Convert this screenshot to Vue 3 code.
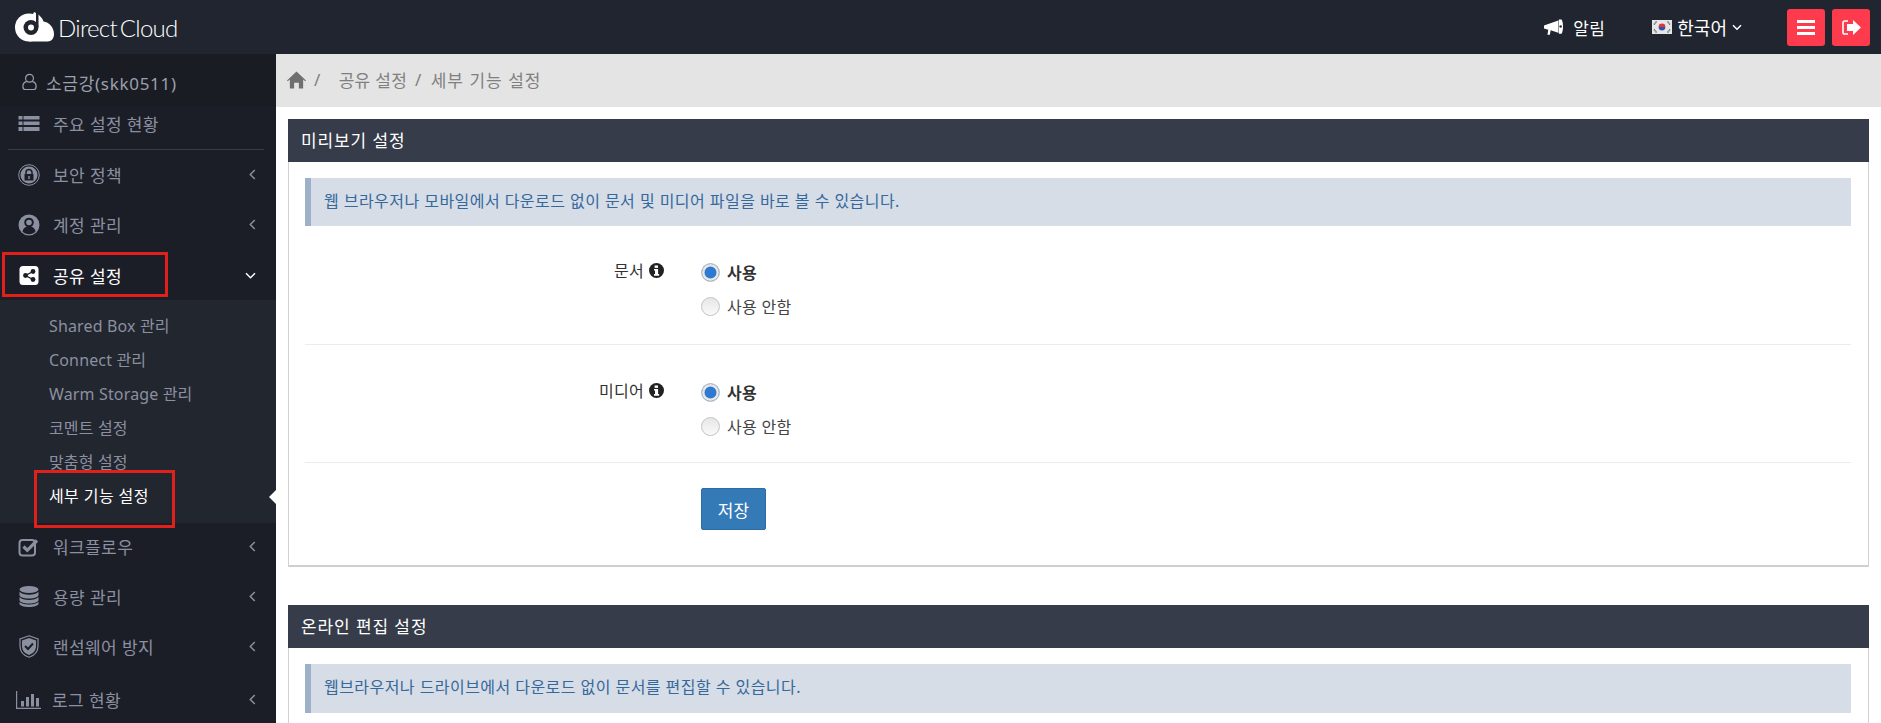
<template>
  <div class="page">
    <header class="topbar">
      <div class="brand">
        <svg class="brand__logo" viewBox="0 0 40 30" width="40" height="30">
          <circle cx="14" cy="15.500" r="14" fill="#fff" />
          <path fill="#fff" d="M19 0c4 1.500 8 5 9.500 9.500C34 10 39 15.500 39 22c0 4.500-2.500 7.500-6.500 7.500H14V10z" />
          <circle cx="16" cy="15.500" r="7.500" fill="#21252f" />
          <rect x="21" y="0" width="2.500" height="15" fill="#21252f" />
          <circle cx="16" cy="15.500" r="3" fill="#fff" />
        </svg>
        <span class="brand__name">Direct Cloud</span>
      </div>
      <div class="topbar__right">
        <div class="notice">
          <svg viewBox="0 0 20 17" width="19" height="17">
            <path fill="#fff" d="M0 6.500 15 1.200V14L7 11.500l-.8 4.500H3.600l.9-5.200L0 9.500zM16 0h2.500c1 1.500 1.500 4 1.500 7.500s-.5 6-1.500 7.500H16c-.3 0-.5-.2-.5-.5V.5c0-.3.2-.5.5-.5z" />
            <circle cx="17.500" cy="7.500" r="1.300" fill="#21252f" />
          </svg>
          <span>알림</span>
        </div>
        <div class="lang">
          <svg viewBox="0 0 20 14" width="20" height="14">
            <rect width="20" height="14" fill="#e6e6e6" />
            <path fill="#e0333c" d="M6.600 7a3.400 3.400 0 0 1 6.800 0z" />
            <path fill="#2a55b0" d="M6.600 7a3.400 3.400 0 0 0 6.800 0z" />
            <path stroke="#555" stroke-width="1.400" stroke-dasharray="1 .5" d="M2 4.500 4.500 1.500M15.500 1.500 18 4.500M2 9.500l2.500 3M15.500 12.500l2.500-3" />
          </svg>
          <span>한국어</span>
          <svg viewBox="0 0 10 7" width="10" height="7">
            <path fill="none" stroke="#fff" stroke-width="1.500" d="M1 1.200 5 5.200 9 1.200" />
          </svg>
        </div>
        <div class="actions">
          <button class="actions__btn" type="button">
            <svg viewBox="0 0 18 15" width="18" height="15">
              <path fill="#fff" d="M0 0h18v3H0zM0 6h18v3H0zM0 12h18v3H0z" />
            </svg>
          </button>
          <button class="actions__btn" type="button">
            <svg viewBox="0 0 19 15" width="19" height="15">
              <path fill="#fff" d="M11 0l8 7.500L11 15v-4H5V4h6z" />
              <path fill="none" stroke="#fff" stroke-width="1.600" d="M6 1H2.800C1.800 1 1 1.800 1 2.800v9.400c0 1 .8 1.800 1.800 1.800H6" />
            </svg>
          </button>
        </div>
      </div>
    </header>

    <div class="body">
      <aside class="sidebar">
        <div class="user">
          <svg viewBox="0 0 16 18" width="15" height="18">
            <circle cx="8" cy="5" r="4.200" fill="none" stroke="#9ba0ad" stroke-width="1.300" />
            <path fill="none" stroke="#9ba0ad" stroke-width="1.300" d="M5 8.500C2.500 9 1 10.500 1 13v1C1 16 2 17 3.500 17h9c1.500 0 2.500-1 2.500-3v-1c0-2.500-1.500-4-4-4.500" />
          </svg>
          <span>소금강(skk0511)</span>
        </div>

        <a class="menu-item menu-item--first">
          <svg class="menu-item__icon" viewBox="0 0 21 15" width="21" height="15">
            <path fill="#8b90a0" d="M0 0h4v3.500H0zM5 0h16v3.500H5zM0 5.500h4V9H0zM5 5.500h16V9H5zM0 11h4v4H0zM5 11h16v4H5z" />
          </svg>
          <span>주요 설정 현황</span>
        </a>
        <div class="sidebar__rule"></div>

        <a class="menu-item">
          <svg class="menu-item__icon" viewBox="0 0 22 22" width="22" height="22">
            <circle cx="11" cy="11" r="10.300" fill="none" stroke="#8b90a0" stroke-width="1" />
            <circle cx="11" cy="11" r="8.500" fill="#8b90a0" />
            <path fill="none" stroke="#1b1e27" stroke-width="1.500" d="M8 10V8.500a3 3 0 0 1 6 0V10" />
            <rect x="6.500" y="10" width="9" height="6.500" fill="#1b1e27" />
            <rect x="10.300" y="12" width="1.400" height="3" fill="#8b90a0" />
          </svg>
          <span>보안 정책</span>
          <svg class="menu-item__caret" viewBox="0 0 7 11" width="7" height="11">
            <path fill="none" stroke="#8b90a0" stroke-width="1.500" d="M5.800 1 1.300 5.500l4.500 4.500" />
          </svg>
        </a>
        <a class="menu-item">
          <svg class="menu-item__icon" viewBox="0 0 22 22" width="22" height="22">
            <circle cx="11" cy="11" r="10.500" fill="#8b90a0" />
            <circle cx="11" cy="8.500" r="3.800" fill="none" stroke="#1b1e27" stroke-width="2" />
            <path fill="#1b1e27" d="M4.500 17.500c.5-3 2.500-4.500 4-4.800h5c1.500.3 3.500 1.800 4 4.800-1.500 1.800-4 2.800-6.500 2.800s-5-1-6.500-2.800z" />
          </svg>
          <span>계정 관리</span>
          <svg class="menu-item__caret" viewBox="0 0 7 11" width="7" height="11">
            <path fill="none" stroke="#8b90a0" stroke-width="1.500" d="M5.800 1 1.300 5.500l4.500 4.500" />
          </svg>
        </a>
        <a class="menu-item menu-item--open">
          <svg class="menu-item__icon" viewBox="0 0 19 19" width="19" height="19">
            <rect width="19" height="19" rx="3.500" fill="#fff" />
            <path fill="none" stroke="#1b1e27" stroke-width="1.400" d="M13.500 5.500 6 9.500l7.500 4" />
            <circle cx="13.500" cy="5.500" r="2.400" fill="#1b1e27" />
            <circle cx="6" cy="9.500" r="2.400" fill="#1b1e27" />
            <circle cx="13.500" cy="13.500" r="2.400" fill="#1b1e27" />
          </svg>
          <span>공유 설정</span>
          <svg class="menu-item__caret" viewBox="0 0 11 7" width="11" height="7">
            <path fill="none" stroke="#fff" stroke-width="1.500" d="M1 1.200 5.500 5.700 10 1.200" />
          </svg>
        </a>

        <ul class="submenu">
          <li v-for="item in subItems" :key="item" class="submenu__item" :class="{ 'submenu__item--active': item === activeSub }">{{ item }}</li>
        </ul>

        <a class="menu-item">
          <svg class="menu-item__icon" viewBox="0 0 21 20" width="21" height="20">
            <rect x="1" y="3" width="15.500" height="15.500" rx="3" fill="none" stroke="#8b90a0" stroke-width="2" />
            <path fill="none" stroke="#8b90a0" stroke-width="3.200" d="M5 9.500l3.800 3.800L18.500 3.500" />
          </svg>
          <span>워크플로우</span>
          <svg class="menu-item__caret" viewBox="0 0 7 11" width="7" height="11">
            <path fill="none" stroke="#8b90a0" stroke-width="1.500" d="M5.800 1 1.300 5.500l4.500 4.500" />
          </svg>
        </a>
        <a class="menu-item">
          <svg class="menu-item__icon" viewBox="0 0 19 21" width="19" height="21">
            <ellipse cx="9.500" cy="3.500" rx="9.500" ry="3.500" fill="#8b90a0" />
            <path fill="#8b90a0" d="M0 5.800c1.500 2 5.500 3 9.500 3s8-1 9.500-3V9c0 2-4.200 3.500-9.500 3.500S0 11 0 9zM0 11c1.500 2 5.500 3 9.500 3s8-1 9.500-3v3c0 2-4.200 3.500-9.500 3.500S0 16 0 14z" />
            <path fill="#8b90a0" d="M0 15.800c1.500 2 5.500 2.700 9.500 2.700s8-.7 9.500-2.700v2c0 1.800-4.200 3.200-9.500 3.200S0 19.600 0 17.800z" />
          </svg>
          <span>용량 관리</span>
          <svg class="menu-item__caret" viewBox="0 0 7 11" width="7" height="11">
            <path fill="none" stroke="#8b90a0" stroke-width="1.500" d="M5.800 1 1.300 5.500l4.500 4.500" />
          </svg>
        </a>
        <a class="menu-item">
          <svg class="menu-item__icon" viewBox="0 0 20 23" width="20" height="23">
            <path fill="none" stroke="#8b90a0" stroke-width="1.200" d="M10 .8l9 3.200v7c0 5.500-3.500 9.500-9 11.200C4.500 20.500 1 16.500 1 11V4z" />
            <path fill="#8b90a0" d="M10 3l7 2.500V11c0 4.500-2.800 7.500-7 9-4.200-1.500-7-4.500-7-9V5.500z" />
            <path fill="none" stroke="#1b1e27" stroke-width="2" d="M6 11l3 3 5-5.500" />
          </svg>
          <span>랜섬웨어 방지</span>
          <svg class="menu-item__caret" viewBox="0 0 7 11" width="7" height="11">
            <path fill="none" stroke="#8b90a0" stroke-width="1.500" d="M5.800 1 1.300 5.500l4.500 4.500" />
          </svg>
        </a>
        <a class="menu-item menu-item--last">
          <svg class="menu-item__icon menu-item__icon--wide" viewBox="0 0 25 18" width="25" height="18">
            <path fill="#8b90a0" d="M0 0h1.200v16.800H25V18H0z" />
            <path fill="#8b90a0" d="M5 10h3v5.500H5zM10 6h3v9.500h-3zM15 3h3v12.500h-3zM20 7h3v8.500h-3z" />
          </svg>
          <span>로그 현황</span>
          <svg class="menu-item__caret" viewBox="0 0 7 11" width="7" height="11">
            <path fill="none" stroke="#8b90a0" stroke-width="1.500" d="M5.800 1 1.300 5.500l4.500 4.500" />
          </svg>
        </a>

        <div class="marker marker--share"></div>
        <div class="marker marker--detail"></div>
      </aside>

      <main class="content">
        <nav class="crumbs">
          <svg viewBox="0 0 20 18" width="19" height="18">
            <path fill="#6f6f6f" d="M10 0l10 9.500-.8.800L17 8.500V18h-4.500v-6h-5v6H3V8.500L.8 10.300 0 9.500z" />
          </svg>
          <span class="crumbs__sep crumbs__sep--home">/</span>
          <span>공유 설정</span>
          <span class="crumbs__sep">/</span>
          <span class="crumbs__current">세부 기능 설정</span>
        </nav>

        <section class="panel panel--preview">
          <h2 class="panel__head">미리보기 설정</h2>
          <div class="panel__body">
            <p class="hint">웹 브라우저나 모바일에서 다운로드 없이 문서 및 미디어 파일을 바로 볼 수 있습니다.</p>
            <div v-for="row in previewRows" :key="row" class="field">
              <div class="field__label">
                <span>{{ row }}</span>
                <svg viewBox="0 0 16 16" width="15" height="15">
                  <circle cx="8" cy="8" r="8" fill="#222" />
                  <rect x="6" y="2.600" width="3.600" height="2.600" fill="#fff" />
                  <path fill="#fff" d="M5.300 6.400h4.400v5.400h1.100v1.700H5.300v-1.700h1.100V8.100H5.300z" />
                </svg>
              </div>
              <div class="field__control">
                <label class="radio radio--on">
                  <input type="radio" :name="row" checked />
                  <span>사용</span>
                </label>
                <label class="radio">
                  <input type="radio" :name="row" />
                  <span>사용 안함</span>
                </label>
              </div>
            </div>
            <div class="save-row">
              <button class="save-row__btn" type="button">저장</button>
            </div>
          </div>
        </section>

        <section class="panel">
          <h2 class="panel__head">온라인 편집 설정</h2>
          <div class="panel__body panel__body--open">
            <p class="hint">웹브라우저나 드라이브에서 다운로드 없이 문서를 편집할 수 있습니다.</p>
          </div>
        </section>
      </main>
    </div>
  </div>
</template>

<script setup>
const subItems = [
  "Shared Box 관리",
  "Connect 관리",
  "Warm Storage 관리",
  "코멘트 설정",
  "맞춤형 설정",
  "세부 기능 설정",
];
const activeSub = "세부 기능 설정";
const previewRows = ["문서", "미디어"];
</script>

<style>
html,
body {
  margin: 0;
  background: #fff;
  overflow: hidden;
}
</style>

<style scoped>
.page {
  height: 723px;
  overflow: hidden;
  display: flex;
  flex-direction: column;
  font-family: "Noto Sans", "Noto Sans CJK KR", sans-serif;
  color: #333;
}

.topbar {
  flex: 0 0 54px;
  display: flex;
  align-items: center;
  justify-content: space-between;
  background: #21252f;
  padding: 0 11px 0 15px;
}

.brand {
  display: flex;
  align-items: center;
  gap: 3px;
}

.brand__name {
  font-family: Lato, sans-serif;
  font-weight: 300;
  font-size: 24px;
  letter-spacing: -0.7px;
  word-spacing: -3px;
  color: #fff;
}

.topbar__right {
  display: flex;
  align-items: center;
}

.notice {
  display: flex;
  align-items: center;
  gap: 10px;
  font-size: 17px;
  letter-spacing: 0.4px;
  color: #fff;
  margin-right: 47px;
}

.lang {
  display: flex;
  align-items: center;
  gap: 5px;
  font-size: 18px;
  color: #fff;
  margin-right: 45px;
}

.actions {
  display: flex;
  gap: 7px;
}

.actions__btn {
  width: 38px;
  height: 37px;
  padding: 0;
  border: none;
  border-radius: 3px;
  background: #fe3b4c;
  display: flex;
  align-items: center;
  justify-content: center;
}

.body {
  flex: 1;
  display: flex;
  min-height: 0;
}

.sidebar {
  position: relative;
  flex: 0 0 276px;
  background: #1b1e27;
  color: #8b90a0;
}

.user {
  height: 53px;
  box-sizing: border-box;
  padding: 3px 0 0 22px;
  display: flex;
  align-items: center;
  gap: 9px;
  font-size: 17px;
  letter-spacing: 0.7px;
  color: #9ba0ad;
  background: #1a1c23;
}

.sidebar__rule {
  height: 1px;
  margin: 0 12px 1px 8px;
  background: #3a3d46;
}

.menu-item {
  height: 50px;
  box-sizing: border-box;
  display: flex;
  align-items: center;
  padding: 0 20px 3px 0;
  font-size: 17px;
  letter-spacing: 0.4px;
  color: #8b90a0;
}

.menu-item--first {
  height: 34px;
  margin-bottom: 8px;
  padding-bottom: 1px;
}

.menu-item--open {
  height: 49px;
  padding-bottom: 0;
  color: #fff;
}

.menu-item--last {
  margin-top: 3px;
}

.menu-item__icon {
  flex: none;
  width: 22px;
  margin: 0 13px 0 18px;
}

.menu-item__icon--wide {
  width: 25px;
  margin: 0 11px 0 16px;
}

.menu-item__caret {
  margin-left: auto;
}

.submenu {
  list-style: none;
  margin: 0;
  padding: 10px 0 9px;
  background: #22262f;
}

.submenu__item {
  position: relative;
  height: 34px;
  padding-left: 49px;
  line-height: 33px;
  font-size: 16px;
  letter-spacing: 0.15px;
  color: #8b90a0;
}

.submenu__item--active {
  color: #fff;
  letter-spacing: 0.4px;
}

.submenu__item--active::after {
  content: "";
  position: absolute;
  right: 0;
  top: 10px;
  border: 7px solid transparent;
  border-left-width: 0;
  border-right-color: #fff;
}

.marker {
  position: absolute;
  box-sizing: border-box;
  border: 3px solid #e0201b;
}

.marker--share {
  left: 2px;
  top: 198px;
  width: 166px;
  height: 45px;
}

.marker--detail {
  left: 34px;
  top: 416px;
  width: 141px;
  height: 58px;
}

.content {
  flex: 1;
  min-width: 0;
  display: flex;
  flex-direction: column;
}

.crumbs {
  flex: none;
  height: 53px;
  box-sizing: border-box;
  padding: 0 0 2px 11px;
  display: flex;
  align-items: center;
  gap: 8px;
  background: #e4e4e4;
  color: #808080;
  font-size: 17px;
  letter-spacing: 0.3px;
}

.crumbs__sep--home {
  margin-right: 10px;
}

.crumbs__current {
  margin-left: 1px;
  letter-spacing: 1px;
}

.panel {
  flex: none;
  margin: 12px 12px 0;
}

.panel--preview {
  margin-bottom: 26px;
}

.panel__head {
  margin: 0;
  height: 43px;
  padding-left: 13px;
  line-height: 44px;
  background: #363c4a;
  color: #fff;
  font-size: 17px;
  font-weight: 400;
  letter-spacing: 0.9px;
}

.panel__body {
  padding: 16px 17px 0 16px;
  border: 1px solid #d2d2d2;
  border-top: none;
  border-bottom: 2px solid #cfcfcf;
}

.panel__body--open {
  height: 200px;
}

.hint {
  margin: 0;
  height: 48px;
  box-sizing: border-box;
  padding-left: 13px;
  line-height: 47px;
  border-left: 6px solid #9cb1c8;
  background: #d6dde7;
  color: #35689b;
  font-size: 16px;
  letter-spacing: 0.45px;
}

.panel__body--open .hint {
  height: 49px;
}

.field {
  display: grid;
  grid-template-columns: 359px 1fr;
  column-gap: 37px;
  padding: 36px 0 28px;
  border-bottom: 1px solid #ececec;
}

.field + .field {
  padding-top: 37px;
  padding-bottom: 26px;
}

.field__label {
  display: flex;
  align-items: center;
  justify-content: flex-end;
  gap: 5px;
  height: 20px;
  margin-top: -2px;
  font-size: 16px;
  letter-spacing: 0.3px;
  color: #333;
}

.field__control {
  display: flex;
  flex-direction: column;
  gap: 14px;
}

.radio {
  display: flex;
  align-items: center;
  gap: 7px;
  height: 20px;
  font-size: 16px;
  letter-spacing: 0.3px;
  color: #444;
}

.radio--on {
  font-weight: 700;
  color: #333;
}

.radio input {
  appearance: none;
  flex: none;
  box-sizing: border-box;
  width: 19px;
  height: 19px;
  margin: 0;
  border: 1px solid #c4c4c4;
  border-radius: 50%;
  background: linear-gradient(#e6e6e6, #fafafa);
}

.radio input:checked {
  background: #2f7ad1;
  box-shadow: inset 0 0 0 2.5px #e8e8e8;
}

.save-row {
  padding: 25px 0 35px 396px;
}

.save-row__btn {
  display: block;
  width: 65px;
  height: 42px;
  padding: 0;
  border: 1px solid #2e6da4;
  border-radius: 2px;
  background: #337ab7;
  color: #fff;
  font: 400 17px "Noto Sans", "Noto Sans CJK KR", sans-serif;
}
</style>
